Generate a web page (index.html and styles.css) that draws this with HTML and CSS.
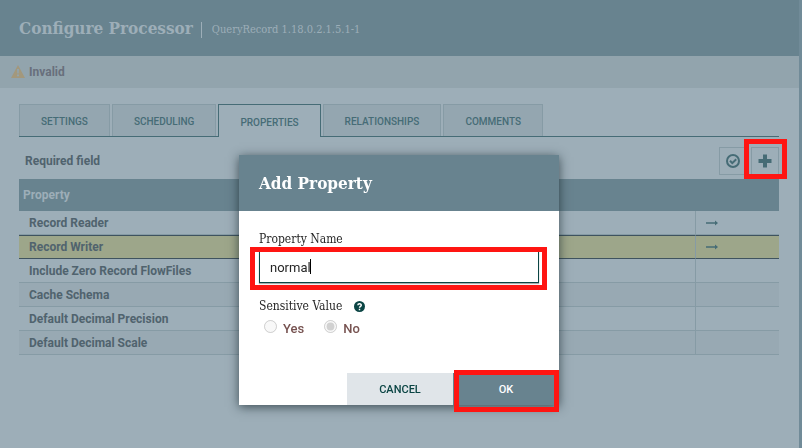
FILE: index.html
```html
<!DOCTYPE html>
<html lang="en">
<head>
<meta charset="utf-8">
<title>Configure Processor</title>
<link rel="stylesheet" href="styles.css">
</head>
<body>
<main class="panel">
  <header class="panel-header">
    <h1>Configure Processor</h1>
    <span class="subtitle">QueryRecord 1.18.0.2.1.5.1-1</span>
  </header>
  <div class="status">
    <svg class="warning" viewBox="0 0 14 13" aria-hidden="true"><path fill="#a3987c" fill-rule="evenodd" d="M7 0 14 13H0ZM6 4 6.300 8.500H7.700L8 4ZM6 9.500V11.300H8V9.500Z"/></svg>
    <span>Invalid</span>
  </div>
  <div class="content">
    <nav class="tabs">
      <button class="tab" type="button">SETTINGS</button>
      <button class="tab" type="button">SCHEDULING</button>
      <button class="tab active" type="button">PROPERTIES</button>
      <button class="tab" type="button">RELATIONSHIPS</button>
      <button class="tab" type="button">COMMENTS</button>
    </nav>
    <div class="toolbar">
      <span class="required">Required field</span>
      <button class="tool" type="button" aria-label="Verify"><svg width="14" height="14" viewBox="0 0 14 14"><circle cx="7" cy="7" r="6" fill="none" stroke="#466c76" stroke-width="2"/><path d="M4 6.800 6.300 9.100 10.200 5.200" fill="none" stroke="#466c76" stroke-width="2"/></svg></button>
      <button class="tool marked" type="button" aria-label="Add"><svg width="14" height="14" viewBox="0 0 14 14"><path d="M5 .5h4V5h4.500v4H9v4.500H5V9H.5V5H5Z" fill="#466c76"/></svg></button>
    </div>
    <table class="properties">
      <thead><tr><th class="name">Property</th><th></th><th class="action"></th></tr></thead>
      <tbody>
        <tr><td>Record Reader</td><td></td><td class="action"><svg class="arrow" viewBox="0 0 12 6"><path d="M0 2.200h9V.5L12 3 9 5.500V3.800H0Z" fill="#466c76"/></svg></td></tr>
        <tr class="selected"><td>Record Writer</td><td></td><td class="action"><svg class="arrow" viewBox="0 0 12 6"><path d="M0 2.200h9V.5L12 3 9 5.500V3.800H0Z" fill="#466c76"/></svg></td></tr>
        <tr><td>Include Zero Record FlowFiles</td><td></td><td class="action"></td></tr>
        <tr><td>Cache Schema</td><td></td><td class="action"></td></tr>
        <tr><td>Default Decimal Precision</td><td></td><td class="action"></td></tr>
        <tr><td>Default Decimal Scale</td><td></td><td class="action"></td></tr>
      </tbody>
    </table>
  </div>
</main>
<div class="overlay">
  <form class="dialog" role="dialog" aria-labelledby="dialog-title">
    <h2 id="dialog-title">Add Property</h2>
    <div class="dialog-body">
      <label class="field-label" for="property-name">Property Name</label>
      <div class="field marked">
        <input id="property-name" type="text" value="normal">
        <span class="caret"></span>
      </div>
      <fieldset>
        <legend>Sensitive Value
          <svg class="help" viewBox="0 0 10 10"><circle cx="5" cy="5" r="5" fill="#0b4544"/><path d="M3.500 3.900C3.500 2 6.600 2 6.600 3.800 6.600 4.900 5 4.900 5 6.200M5 7v1.300" fill="none" stroke="#fff" stroke-width="1.300"/></svg>
        </legend>
        <div class="options">
          <label><input type="radio" name="sensitive" disabled><span>Yes</span></label>
          <label><input type="radio" name="sensitive" checked disabled><span>No</span></label>
        </div>
      </fieldset>
    </div>
    <div class="actions">
      <button class="cancel" type="button">CANCEL</button>
      <button class="ok marked" type="button">OK</button>
    </div>
  </form>
</div>
</body>
</html>
```
FILE: styles.css
```css
* {
  box-sizing: border-box;
}

:root {
  --slab: "Roboto Slab", "DejaVu Serif Condensed", "DejaVu Serif", serif;
  --header: #68838f;
  --surface: #9daeb8;
  --line: #869ba5;
  --accent: #466c76;
  --text: #50636e;
  --mark: #ff1512;
}

body {
  margin: 0;
  min-height: 100vh;
  display: flex;
  background: #718b98;
  font-family: Roboto, sans-serif;
  font-size: 12px;
  color: var(--text);
  overflow: hidden;
}

button {
  font-family: inherit;
  padding: 0;
  border-radius: 0;
}

h1,
h2 {
  margin: 0;
  font-family: var(--slab);
  font-weight: 700;
}

.panel {
  flex: 1;
  margin-right: 3px;
  background: var(--surface);
}

.panel-header {
  display: flex;
  align-items: center;
  gap: 8px;
  padding: 16px 19px;
  background: var(--header);
  color: #9daeb8;
}

h1 {
  font-size: 17px;
  line-height: 24px;
}

.subtitle {
  margin-top: 4px;
  padding-left: 10px;
  border-left: 1px solid #9daeb8;
  font-family: var(--slab);
  font-size: 11px;
  line-height: 16px;
}

.status {
  display: flex;
  align-items: center;
  gap: 4px;
  height: 32px;
  padding-left: 11px;
  background: #92a4ad;
  color: #686f7c;
  font-weight: 700;
}

.warning {
  width: 14px;
  height: 13px;
  margin-bottom: 2px;
}

.content {
  padding: 16px 20px 0 19px;
}

.tabs {
  display: flex;
  gap: 2px;
  border-bottom: 1px solid var(--accent);
}

.tab {
  height: 32px;
  padding: 2px 21px 0;
  border: 1px solid var(--line);
  border-bottom: 0;
  background: #94a6b0;
  color: var(--accent);
  font-size: 10px;
  font-weight: 500;
}

.tab.active {
  height: 33px;
  margin-bottom: -1px;
  border-color: var(--accent);
  background: var(--surface);
}

.toolbar {
  display: flex;
  align-items: center;
  gap: 4px;
  padding: 10px 0 4px;
}

.required {
  flex: 1;
  padding-left: 6px;
  font-weight: 700;
}

.tool {
  display: grid;
  place-items: center;
  width: 28px;
  height: 28px;
  border: 1px solid var(--line);
  background: none;
}

.marked {
  position: relative;
}

.marked::after {
  content: "";
  position: absolute;
  border: 5px solid var(--mark);
  pointer-events: none;
}

.tool.marked::after {
  inset: -9px -9px -5px -8px;
}

.properties {
  width: 100%;
  table-layout: fixed;
  border-collapse: separate;
  border-spacing: 0;
}

th {
  height: 32px;
  padding: 0 4px;
  background: var(--header);
  color: #9daeb8;
  text-align: left;
}

td {
  height: 24px;
  padding: 0 10px;
  border-bottom: 1px solid var(--line);
  font-weight: 700;
  white-space: nowrap;
}

.name {
  width: 50%;
}

.action {
  width: 84px;
}

td.action {
  border-left: 1px solid var(--line);
}

tbody tr:nth-child(even) td {
  background: #98a9b3;
}

tbody tr.selected td {
  background: #9da68a;
  border-top: 1px solid #3f535f;
  border-bottom-color: #3f535f;
}

.arrow {
  display: block;
  width: 12px;
  height: 6px;
}

.overlay {
  position: fixed;
  inset: 0;
  display: flex;
  justify-content: center;
  align-items: flex-start;
  padding: 155px 4px 0 0;
}

.dialog {
  width: 320px;
  background: #fff;
  box-shadow: 0 2px 10px rgba(20, 35, 43, 0.7);
  color: #262626;
}

h2 {
  padding: 16px 20px;
  background: var(--header);
  color: #fff;
  font-size: 17px;
  line-height: 24px;
}

.dialog-body {
  padding: 20px 20px 35px;
}

.field-label,
legend {
  display: block;
  padding: 0;
  font-family: var(--slab);
  font-size: 12px;
  line-height: 16px;
}

.field {
  margin-top: 4px;
}

.field.marked::after {
  inset: -4px -8px -7px -9px;
}

.field input {
  display: block;
  width: 100%;
  height: 32px;
  padding: 0 10px;
  border: 1px solid #0b4544;
  outline: 0;
  box-shadow: 0 1px 1px #aaa;
  color: #262626;
  font-family: inherit;
  font-size: 13px;
}

.caret {
  position: absolute;
  left: 51px;
  top: 8px;
  width: 1px;
  height: 15px;
  background: #000;
}

fieldset {
  margin: 15px 0 0;
  padding: 0;
  border: 0;
}

legend {
  display: flex;
  align-items: center;
  gap: 12px;
}

.help {
  width: 11px;
  height: 11px;
}

.options {
  display: flex;
  gap: 20px;
  padding: 4px 0 0 5px;
}

.options label {
  display: flex;
  gap: 6px;
  color: #775351;
  font-size: 13px;
  font-weight: 500;
  line-height: 20px;
}

.options input {
  width: 13px;
  height: 13px;
  margin: 2px 0 0;
}

.options span {
  padding-top: 1px;
}

.actions {
  display: flex;
  justify-content: flex-end;
  margin-top: -1px;
}

.actions button {
  width: 106px;
  height: 32px;
  border: 0;
  font-size: 11px;
  font-weight: 500;
}

.actions .cancel {
  width: 106px;
  background: #e0e5e9;
  color: #0b4544;
}

.actions .ok {
  background: var(--header);
  color: #fff;
}

.ok.marked::after {
  inset: -3px 0 -7px 1px;
}
```
